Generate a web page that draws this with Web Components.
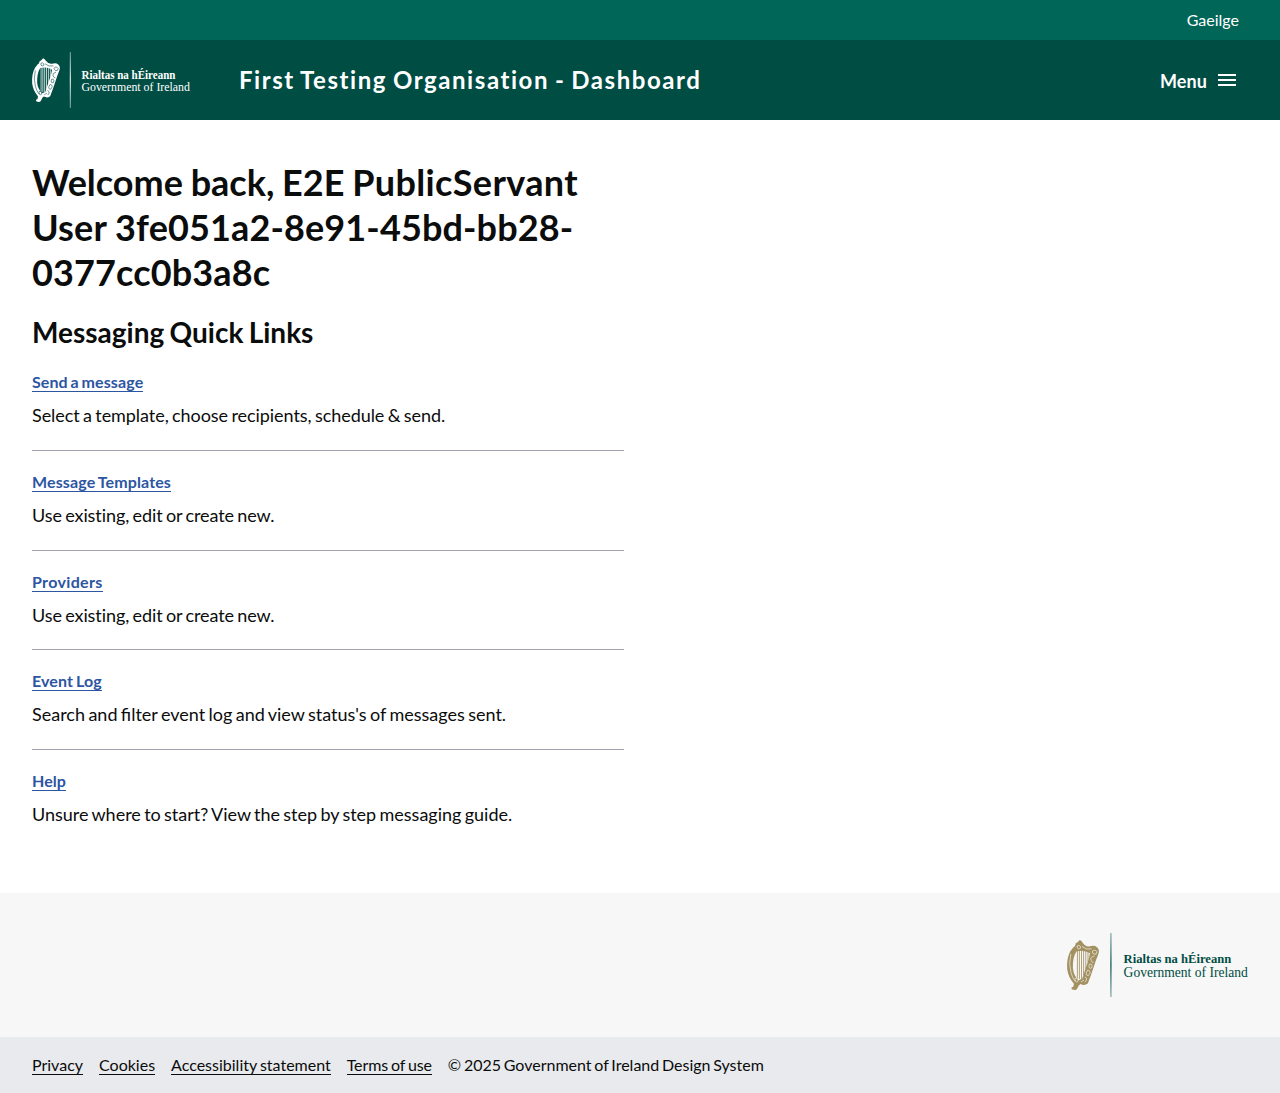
<!DOCTYPE html>
<html lang="en">
<head>
<meta charset="utf-8">
<title>Dashboard</title>
<style>
body{margin:0;font-family:Lato,"Liberation Sans",sans-serif;color:#0b0c0c;background:#fff}
</style>
</head>
<body>
<app-page></app-page>
<script>
const define = (name, html) => {
  const t = document.createElement('template');
  t.innerHTML = html;
  customElements.define(name, class extends HTMLElement {
    constructor() {
      super();
      this.attachShadow({mode: 'open'}).append(t.content.cloneNode(true));
    }
  });
};

define('gov-logo', `
<style>
:host{display:block;--ink:#fff;--harp:#fff;--back:#004d44}
svg{display:block;width:100%;height:100%;overflow:visible}
text{font-family:"Liberation Serif",serif;fill:var(--ink)}
</style>
<svg viewBox="0 0 182 64" preserveAspectRatio="xMinYMid meet">
<defs><linearGradient id="g" x1="0" y1="0" x2="0" y2="1"><stop offset="0" stop-color="var(--ink)" stop-opacity=".4"/><stop offset=".5" stop-color="var(--ink)" stop-opacity=".85"/><stop offset="1" stop-color="var(--ink)" stop-opacity=".4"/></linearGradient></defs>
<path fill="var(--harp)" d="M12.8 7 Q14.8 7.8 15.6 9.8 Q18.5 14 23 13.3 Q27.5 12 30 14.2 Q32.8 16.8 31.5 20.4 Q30.6 23.5 29.2 26.5 L24 42 L20.8 50.5 Q17.5 53 13.5 51 Q11.6 52 10.8 54.6 Q9.4 58 6.8 56.8 Q4 57 4.6 54.6 Q7.2 53.8 6.8 50.5 Q1.3 44.6 .2 36 Q-.6 25.5 3.3 18.2 L6.6 14 Q8.2 13.7 8.4 11.8 Q8 10 10.3 9.6 Z"/>
<path fill="var(--back)" d="M9.4 18.4 Q17 16.4 23 20.3 L21.4 27 L15.2 45.7 L11.5 47.2 Q6.6 42.6 5.9 35 Q5.5 24.4 9.4 18.4Z"/>
<g fill="none" stroke="var(--harp)" stroke-width=".85"><path d="M10.4 18V46M12.4 17V46M14.5 17V46M16.6 17V42.5M18.8 18V36M21 19V29"/></g>
<g fill="none" stroke="var(--back)" stroke-width=".65"><path d="M3.8 21Q1.4 31 4 39.5T9 48M10.2 13q1.8-1.6 3.2.4t-1.8 2.6q-2-.6-1.4-3M15 13.5q4 3.6 9.5 2.4M25.2 19q.8-2.7 3.3-1.7t.6 3.7q-2.8 1.3-3.9-2M27.5 23q-4.8 1.2-3.4 4.2t2.6 2.2M22.6 31q3.9-.4 1.8 4.2q-3.9.5-1.8-4.2M20.8 37q4.4 1.2.5 5.7q-4-.7-.5-5.7M17.8 44q3.5 1.2.3 5.2M8 45.4q2.4-1.4 3.1.9t-1.7 2.8q-2.1-1-1.4-3.7M14 49l3-2"/></g>
<rect x="43.2" y="0" width="1.4" height="64" fill="url(#g)"/>
<text x="56.6" y="30.4" font-size="13.4" font-weight="700" textLength="107.6" lengthAdjust="spacingAndGlyphs">Rialtas na hÉireann</text>
<text x="56.6" y="44.3" font-size="13.6" textLength="124.2" lengthAdjust="spacingAndGlyphs">Government of Ireland</text>
</svg>`);

define('app-header', `
<style>
:host{display:block;color:#fff}
.top{box-sizing:border-box;height:40px;background:#006658;display:flex;align-items:center;justify-content:flex-end;padding:0 41px 2px 0;font-size:16px}
.bar{height:80px;background:#004d44;display:flex;align-items:center;padding:0 43px 0 32px}
gov-logo{width:159px;height:56px}
.title{margin-left:48px;font-size:24px;font-weight:700;letter-spacing:1.56px;word-spacing:-1.5px;line-height:30px;white-space:nowrap}
.menu{margin-left:auto;display:flex;align-items:center;gap:10px;font-size:18px;font-weight:700}
.menu span{padding-top:1px;letter-spacing:.1px}
svg{display:block}
</style>
<div class="top"><span>Gaeilge</span></div>
<div class="bar"><gov-logo></gov-logo><div class="title">First Testing Organisation - Dashboard</div>
<div class="menu"><span>Menu</span><svg width="20" height="12" fill="#fff"><path d="M1 0h18v2H1zM1 5h18v2H1zM1 10h18v2H1z"/></svg></div></div>`);

define('quick-link', `
<style>
:host{display:block;box-sizing:border-box;height:99.7px}
.link{display:block;font-size:16px;line-height:20px;height:20px;color:#2c55a2;font-weight:700;letter-spacing:var(--tls,0);word-spacing:-1.2px}
.link span{display:inline-block;box-sizing:border-box;height:20px;border-bottom:1px solid #2c55a2}
p{margin:10px 0 0;font-size:18px;line-height:27px;letter-spacing:var(--ls,0);word-spacing:var(--ws,-1.2px)}
.rule{margin-top:20.8px;height:1px;background:#a0a3ae}
:host([last]) .rule{display:none}
</style>
<div class="link"><span><slot name="title"></slot></span></div><p><slot></slot></p><div class="rule"></div>`);

define('app-footer', `
<style>
:host{display:block}
.brand{height:144px;background:#f7f7f7;display:flex;align-items:center;justify-content:flex-end;padding-right:31px}
gov-logo{width:182px;height:64px;--ink:#004d44;--harp:#a39161;--back:#f7f7f7}
.legal{height:56px;background:#e8eaed;display:flex;align-items:center;gap:16px;padding-left:32px;font-size:16px;line-height:17px;word-spacing:-1px}
.legal a{border-bottom:1px solid #0b0c0c}
.legal>*{height:19px;box-sizing:border-box}
.terms{letter-spacing:-.12px}
.copy{word-spacing:-1.35px}
</style>
<div class="brand"><gov-logo></gov-logo></div>
<div class="legal"><a>Privacy</a><a>Cookies</a><a>Accessibility statement</a><a class="terms">Terms of use</a><span class="copy">© 2025 Government of Ireland Design System</span></div>`);

define('app-page', `
<style>
:host{display:block}
main{box-sizing:border-box;height:773px;padding:40px 32px 0}
section{width:592px}
h1{margin:0;font-size:36px;line-height:45px;font-weight:700;letter-spacing:.13px}
.greet{letter-spacing:0;word-spacing:-1px}
.name{letter-spacing:.38px}
h2{margin:20px 0 0;font-size:28px;line-height:35px;font-weight:700;word-spacing:-1.5px}
.links{padding-top:22.2px}
</style>
<app-header></app-header>
<main><section>
<h1><span class="greet">Welcome back, E2E </span><span class="name">PublicServant</span> User 3fe051a2-8e91-45bd-bb28-0377cc0b3a8c</h1>
<h2>Messaging Quick Links</h2>
<div class="links">
<quick-link style="--tls:.1px;--ls:-.055px"><span slot="title">Send a message</span>Select a template, choose recipients, schedule &amp; send.</quick-link>
<quick-link style="--tls:.13px;--ls:-.08px"><span slot="title">Message Templates</span>Use existing, edit or create new.</quick-link>
<quick-link style="--tls:.34px;--ls:-.08px"><span slot="title">Providers</span>Use existing, edit or create new.</quick-link>
<quick-link style="--tls:.13px"><span slot="title">Event Log</span>Search and filter event log and view status's of messages sent.</quick-link>
<quick-link last style="--tls:.08px;--ws:-1.3px"><span slot="title">Help</span>Unsure where to start? View the step by step messaging guide.</quick-link>
</div>
</section></main>
<app-footer></app-footer>`);
</script>
</body>
</html>
